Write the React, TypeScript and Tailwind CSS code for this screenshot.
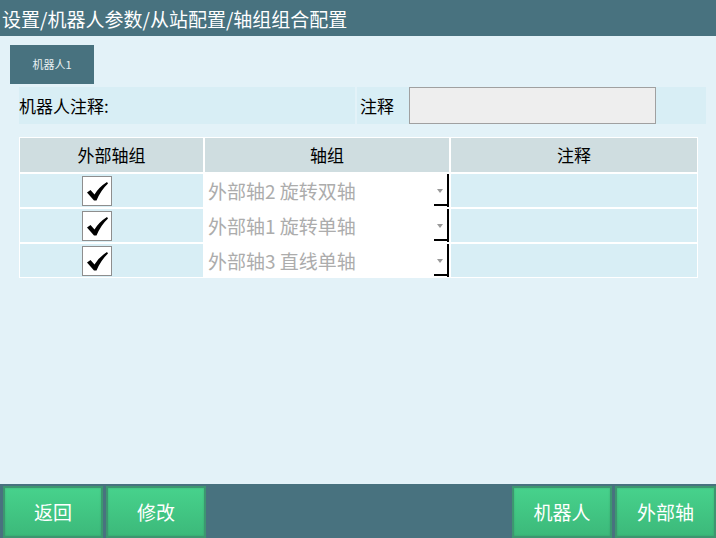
import React from 'react';

const FONT = '"Microsoft YaHei", "Noto Sans CJK SC", "Noto Sans", sans-serif';

const rows = [
  { name: '外部轴2 旋转双轴', checked: true },
  { name: '外部轴1 旋转单轴', checked: true },
  { name: '外部轴3 直线单轴', checked: true },
];

const CheckBox = ({ checked }: { checked: boolean }) => (
  <div className="w-[30px] h-[30px] bg-white border-[1.5px] border-[#8e8e8e] flex items-center justify-center">
    {checked && (
      <svg width="22" height="20" viewBox="0 0 22 20">
        <path d="M1 11.5 L4.5 9 L8.5 13.5 Q13 6 21 1 L22 2.5 Q15 9 10.5 19.5 L8 19.5 Z" fill="#000" />
      </svg>
    )}
  </div>
);

const Combo = ({ value }: { value: string }) => (
  <div className="relative h-full bg-white flex items-center pl-[3px] text-[19px] text-[#acacac] leading-none">
    <span>{value}</span>
    {/* dark corner of the combo frame */}
    <div className="absolute right-0 top-0 bottom-0 w-[2px] bg-black" />
    <div className="absolute right-0 bottom-[1px] w-[15px] h-[2px] bg-black" />
    <div className="absolute right-[6px] top-[15px] w-0 h-0 border-l-[3px] border-r-[3px] border-t-[4px] border-l-transparent border-r-transparent border-t-[#9a9a9a]" />
  </div>
);

const GreenButton = ({ label, wide }: { label: string; wide?: boolean }) => (
  <button
    className={`${wide ? 'w-[101px]' : 'w-[100px]'} h-full text-white text-[19px] bg-gradient-to-b from-[#47d28c] to-[#3cb97a] border-2 border-[#3d9670] shadow-[inset_0_0_2px_rgba(0,0,0,0.15)]`}
  >
    {label}
  </button>
);

export default function App() {
  return (
    <div className="w-[716px] h-[538px] flex flex-col bg-[#e3f2f8] overflow-hidden" style={{ fontFamily: FONT }}>
      {/* Title bar */}
      <div className="h-[36px] shrink-0 bg-[#48727f] text-white text-[19px] flex items-center pl-[2px] leading-none">
        设置/机器人参数/从站配置/轴组组合配置
      </div>

      <div className="flex-1 flex flex-col">
        {/* Tab */}
        <div className="ml-[10px] mt-[9px] w-[84px] h-[39px] bg-[#48727f] text-[#e8f0f2] text-[11px] flex items-center justify-center">
          机器人1
        </div>

        {/* Comment row */}
        <div className="mt-[3px] ml-[19px] h-[37px] flex gap-[2px]">
          <div className="w-[336px] bg-[#d8eef5] flex items-center text-[17px] text-black">机器人注释:</div>
          <div className="w-[349px] bg-[#d8eef5] flex items-center">
            <span className="ml-[3px] text-[17px] text-black">注释</span>
            <div className="ml-[15px] w-[247px] h-full bg-[#eeeeee] border border-[#a0a0a0]" />
          </div>
        </div>

        {/* Table */}
        <div className="mt-[13px] ml-[19px] w-[679px] bg-white p-[1px] grid grid-cols-[183px_244px_246px] gap-[2px]">
          <div className="h-[34px] bg-[#cfdde0] flex items-center justify-center text-[17px] text-black">外部轴组</div>
          <div className="h-[34px] bg-[#cfdde0] flex items-center justify-center text-[17px] text-black">轴组</div>
          <div className="h-[34px] bg-[#cfdde0] flex items-center justify-center text-[17px] text-black">注释</div>
          {rows.map((r, i) => (
            <React.Fragment key={i}>
              <div className="h-[33px] bg-[#d8eef5] flex items-center pl-[62px]">
                <CheckBox checked={r.checked} />
              </div>
              <div className="h-[33px]">
                <Combo value={r.name} />
              </div>
              <div className="h-[33px] bg-[#d8eef5]" />
            </React.Fragment>
          ))}
        </div>
      </div>

      {/* Bottom bar */}
      <div className="h-[54px] shrink-0 bg-[#48727f] pt-[2px] pl-[3px] flex gap-[3px]">
        <GreenButton label="返回" />
        <GreenButton label="修改" />
        <div className="flex-1" />
        <GreenButton label="机器人" />
        <GreenButton label="外部轴" wide />
      </div>
    </div>
  );
}
